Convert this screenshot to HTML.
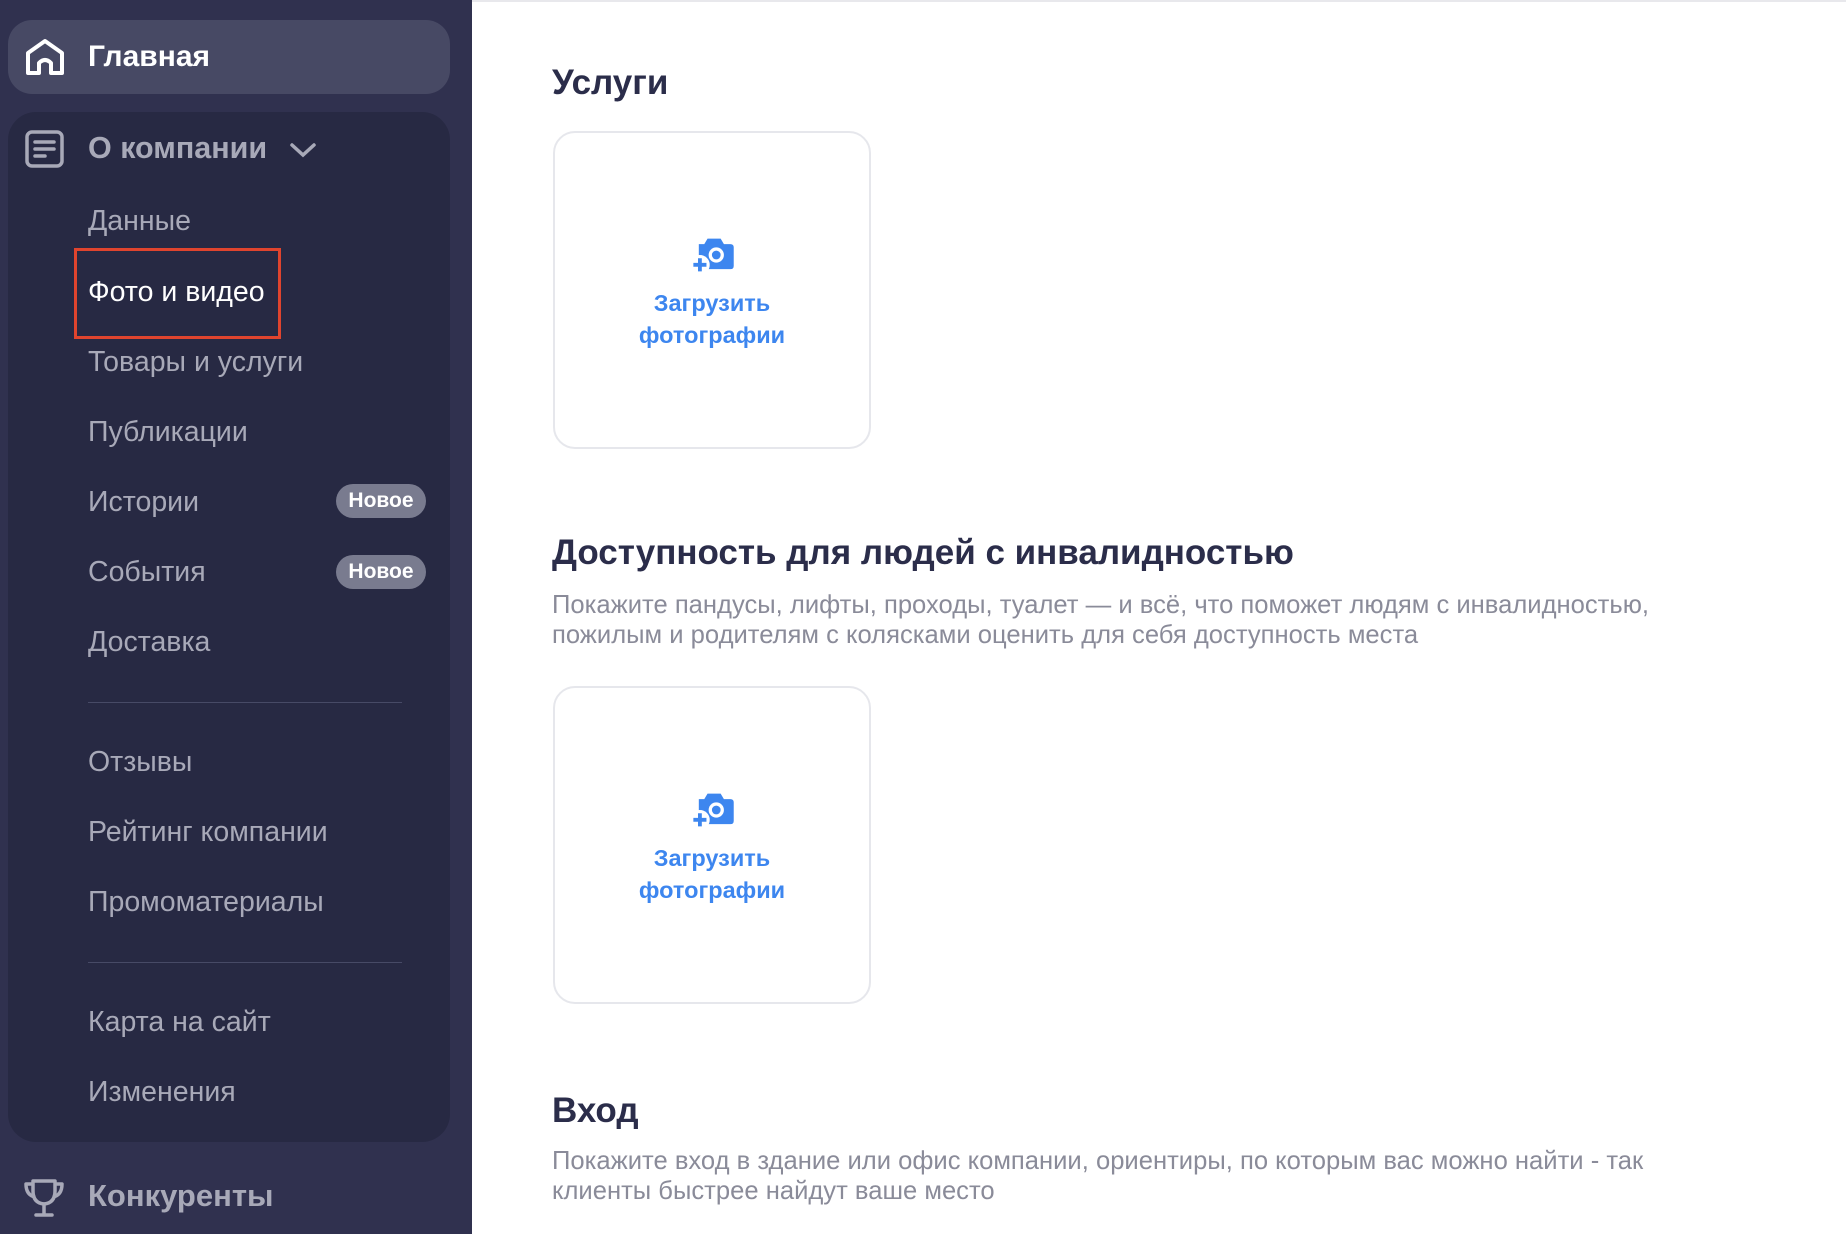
<!DOCTYPE html>
<html><head><meta charset="utf-8"><style>
*{margin:0;padding:0;box-sizing:border-box}
body{width:1846px;height:1234px;overflow:hidden;background:#fff;font-family:"Liberation Sans","Noto Sans CJK SC",sans-serif;position:relative}
.sb{position:absolute;left:0;top:0;width:472px;height:1234px;background:#30314f}
.pill{position:absolute;left:8px;top:20px;width:442px;height:74px;border-radius:24px;background:#474964}
.blk{position:absolute;left:8px;top:112px;width:442px;height:1030px;border-radius:28px;background:#272943}
.t{position:absolute;left:88px;color:#a8a9b8;font-size:28.5px;line-height:30px;white-space:nowrap}
.big{font-weight:bold;font-size:30px;color:#fff}
.badge{position:absolute;left:336px;width:90px;height:34px;border-radius:17px;background:#797b8f;color:#fff;font-weight:bold;font-size:21px;line-height:34px;text-align:center}
.div{position:absolute;left:88px;width:314px;height:1px;background:#474a66}
.h{position:absolute;left:552px;color:#2b2d4a;font-weight:bold;font-size:35px;white-space:nowrap}
.d{position:absolute;left:552px;color:#8a8b99;font-size:25.6px;line-height:30px;white-space:nowrap}
.card{position:absolute;left:553px;width:318px;height:318px;border:2px solid #e6e7ec;border-radius:22px}
.card .lbl{position:absolute;left:0;right:0;top:154px;text-align:center;color:#3d86ef;font-weight:bold;font-size:23.5px;line-height:32px}
.card svg{position:absolute;left:134px;top:100px}
</style></head><body>
<div style="position:absolute;left:472px;top:0;width:1374px;height:2px;background:#e8e8ec"></div>
<div class="sb"></div>
<div class="pill"></div>
<svg style="position:absolute;left:25px;top:38px" width="40" height="38" viewBox="0 0 40 38" fill="none" stroke="#fff" stroke-width="4" stroke-linejoin="round"><path d="M3 15 L20 3 L37 15 V35 H26 V25 Q20 19 14 25 V35 H3 Z"/></svg>
<div class="t big" style="top:42px">Главная</div>
<div class="blk"></div>
<svg style="position:absolute;left:25px;top:130px" width="40" height="38" viewBox="0 0 40 38" fill="none" stroke="#a8a9b8" stroke-width="3.5"><rect x="2" y="2" width="35" height="34" rx="5"/><path d="M10 12H29M10 19H29M10 26H20" stroke-linecap="round"/></svg>
<div class="t big" style="top:133px;color:#a8a9b8;font-size:30.5px">О компании</div>
<svg style="position:absolute;left:289px;top:141px" width="28" height="18" viewBox="0 0 28 18" fill="none" stroke="#a8a9b8" stroke-width="3.5" stroke-linecap="round"><path d="M3 4L14 14L25 4"/></svg>
<div class="t" style="top:206px">Данные</div>
<div style="position:absolute;left:74px;top:248px;width:207px;height:91px;border:3px solid #e0442e"></div>
<div class="t" style="top:277px;color:#fff">Фото и видео</div>
<div class="t" style="top:347px">Товары и услуги</div>
<div class="t" style="top:417px">Публикации</div>
<div class="t" style="top:487px">Истории</div><div class="badge" style="top:484px">Новое</div>
<div class="t" style="top:557px">События</div><div class="badge" style="top:555px">Новое</div>
<div class="t" style="top:627px">Доставка</div>
<div class="div" style="top:702px"></div>
<div class="t" style="top:747px">Отзывы</div>
<div class="t" style="top:817px">Рейтинг компании</div>
<div class="t" style="top:887px">Промоматериалы</div>
<div class="div" style="top:962px"></div>
<div class="t" style="top:1007px">Карта на сайт</div>
<div class="t" style="top:1077px">Изменения</div>
<svg style="position:absolute;left:23px;top:1177px" width="42" height="42" viewBox="0 0 42 42" fill="none" stroke="#a8a9b8" stroke-width="3.5" stroke-linejoin="round"><path d="M10 4H32V14Q32 26 21 27Q10 26 10 14Z"/><path d="M10 7H3Q3 18 12 20M32 7H39Q39 18 30 20"/><path d="M21 27V37M13 38H29" stroke-linecap="round"/></svg>
<div class="t big" style="top:1181px;color:#a8a9b8;font-size:31px">Конкуренты</div>

<div class="h" style="top:63px">Услуги</div>
<div class="card" style="top:131px"><svg width="48" height="44" viewBox="0 0 44 40"><path d="M9 10H14L17 5H29L32 10H38Q41 10 41 13V30Q41 33 38 33H9Z" fill="#3d86ef"/><circle cx="25" cy="20" r="7" fill="#fff"/><circle cx="25" cy="20" r="4" fill="#3d86ef"/><circle cx="10" cy="29" r="9" fill="#fff"/><path d="M10 23V35M4 29H16" stroke="#3d86ef" stroke-width="3.5"/></svg><div class="lbl">Загрузить<br>фотографии</div></div>
<div class="h" style="top:533px">Доступность для людей с инвалидностью</div>
<div class="d" style="top:590px">Покажите пандусы, лифты, проходы, туалет — и всё, что поможет людям с инвалидностью,<br>пожилым и родителям с колясками оценить для себя доступность места</div>
<div class="card" style="top:686px"><svg width="48" height="44" viewBox="0 0 44 40"><path d="M9 10H14L17 5H29L32 10H38Q41 10 41 13V30Q41 33 38 33H9Z" fill="#3d86ef"/><circle cx="25" cy="20" r="7" fill="#fff"/><circle cx="25" cy="20" r="4" fill="#3d86ef"/><circle cx="10" cy="29" r="9" fill="#fff"/><path d="M10 23V35M4 29H16" stroke="#3d86ef" stroke-width="3.5"/></svg><div class="lbl">Загрузить<br>фотографии</div></div>
<div class="h" style="top:1091px">Вход</div>
<div class="d" style="top:1146px">Покажите вход в здание или офис компании, ориентиры, по которым вас можно найти - так<br>клиенты быстрее найдут ваше место</div>
</body></html>
